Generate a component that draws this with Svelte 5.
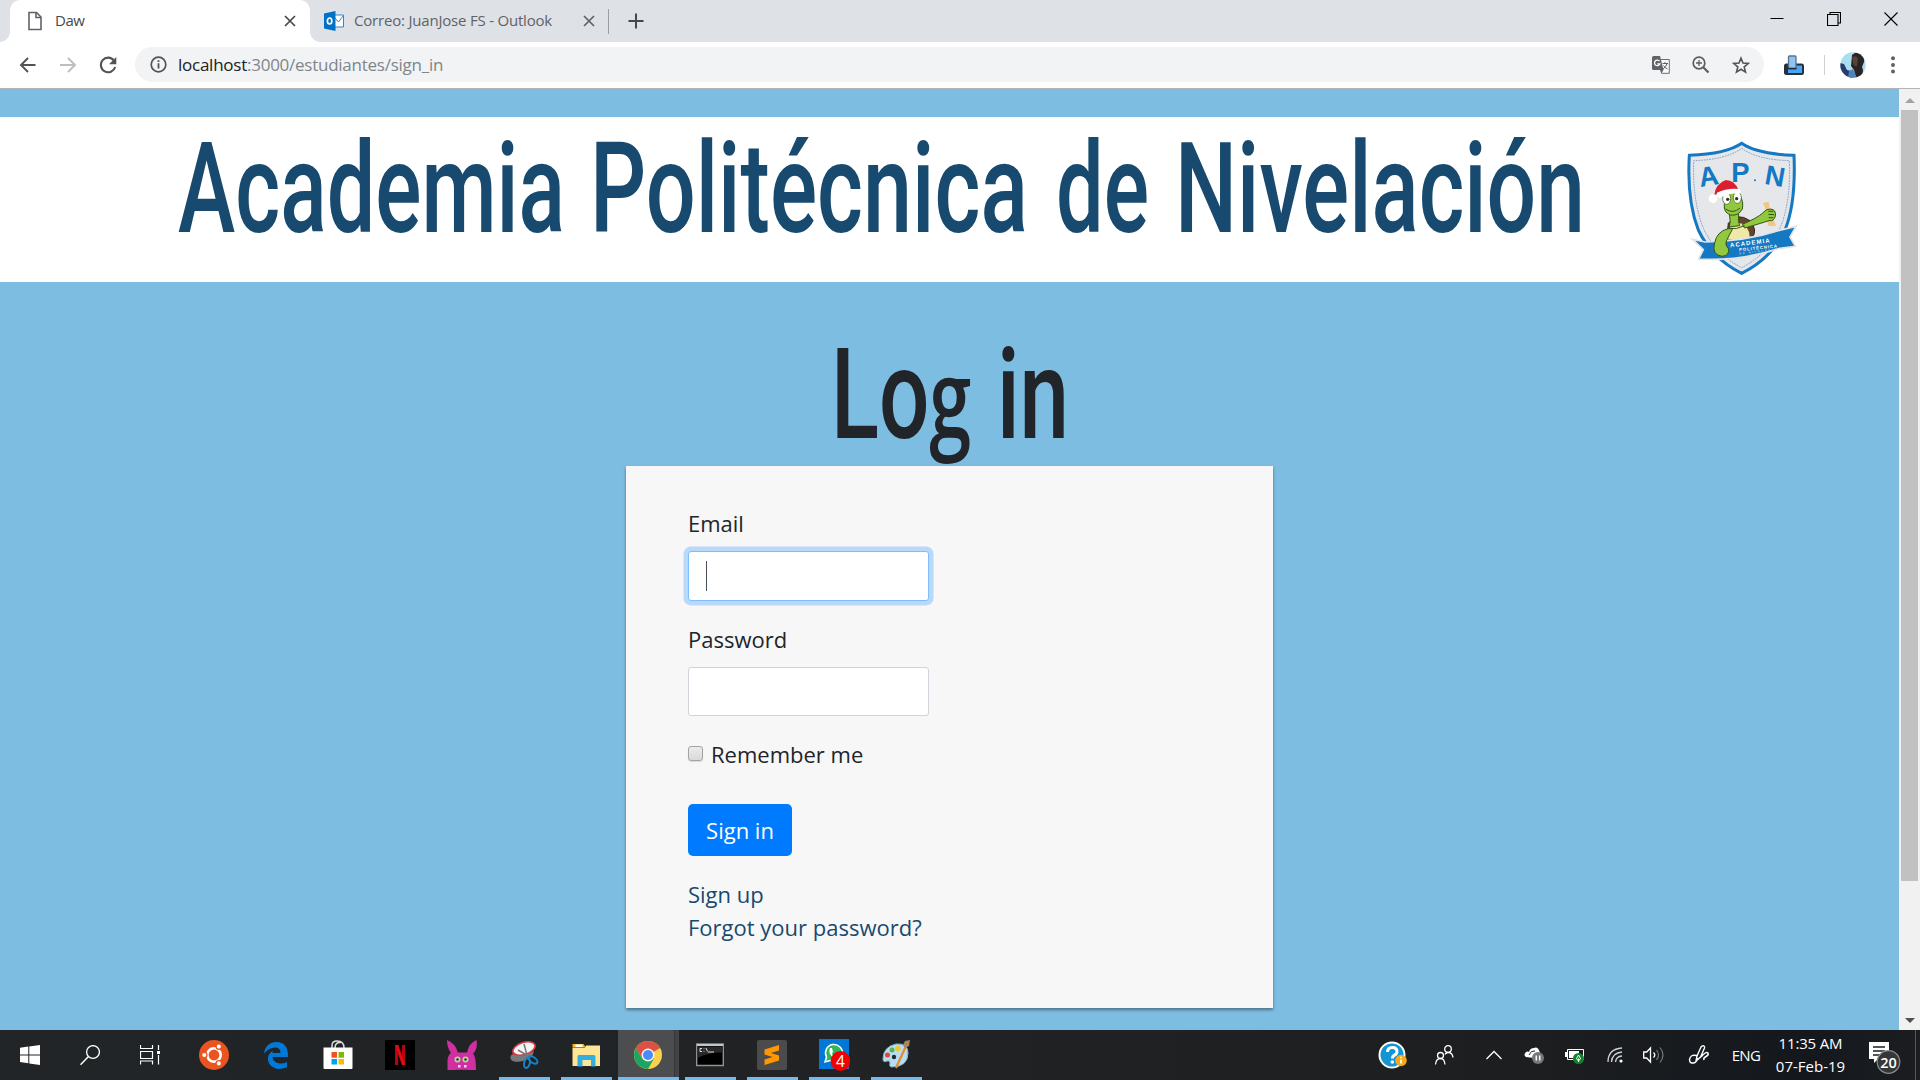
<script>
  let email = $state('');
  let password = $state('');
  let remember = $state(false);

  // Words of the banner heading: start x and drawn width
  const bannerWords = [
    { text: 'Academia', x: 18, width: 387 },
    { text: 'Politécnica', x: 430, width: 438 },
    { text: 'de', x: 896, width: 93 },
    { text: 'Nivelación', x: 1015, width: 410 }
  ];
</script>

<div class="screen">
  <div class="tabs">
    <div class="tab active">
      <svg class="doc" width="14" height="20" viewBox="0 0 14 20"><path d="M1 1.500h7.500l4.500 4.500v12.500H1zM8 1.500v5h5" fill="none" stroke="#5f6368" stroke-width="1.600" /></svg>
      <span class="daw">Daw</span>
      <svg class="x" width="12" height="12" viewBox="0 0 12 12"><path d="M1 1l10 10M11 1L1 11" stroke="#45494d" stroke-width="1.700" /></svg>
    </div>
    <div class="tab second">
      <svg width="20" height="20" viewBox="0 0 20 20">
        <path d="M9 4h10.500v12H9z" fill="#fff" stroke="#2b88d8" /><path d="M10 6l4.500 5L19 5" fill="none" stroke="#2b88d8" />
        <path d="M0 2.500L11.500 0v20L0 17.500z" fill="#0072c6" /><ellipse cx="5.600" cy="10" rx="2.200" ry="3" fill="none" stroke="#fff" stroke-width="1.700" />
      </svg>
      <span class="correo">Correo: JuanJose FS - Outlook</span>
      <svg class="x" width="12" height="12" viewBox="0 0 12 12"><path d="M1 1l10 10M11 1L1 11" stroke="#5f6368" stroke-width="1.700" /></svg>
    </div>
    <i class="tabsep"></i>
    <svg class="plus" width="16" height="16" viewBox="0 0 16 16"><path d="M8 .5v15M.5 8h15" stroke="#45494d" stroke-width="2" /></svg>
    <div class="winctl">
      <svg width="14" height="14" viewBox="0 0 14 14"><path d="M.5 6.500h13" stroke="#000" /></svg>
      <svg width="14" height="14" viewBox="0 0 14 14"><path d="M.5 2.500h10.500v11H.5zM3 2.500V.5h10.500v10.500H11" fill="none" stroke="#000" stroke-width="1.100" /></svg>
      <svg width="14" height="14" viewBox="0 0 14 14"><path d="M.5.5l13 13M13.500.5l-13 13" stroke="#000" stroke-width="1.100" /></svg>
    </div>
  </div>

  <div class="toolbar">
    <svg class="nav" width="18" height="18" viewBox="0 0 18 18"><path d="M16.500 9H2M9 2L2 9l7 7" fill="none" stroke="#505357" stroke-width="1.900" /></svg>
    <svg class="nav" width="18" height="18" viewBox="0 0 18 18"><path d="M1 9h14.500M9 2l7 7-7 7" fill="none" stroke="#bcbec1" stroke-width="1.900" /></svg>
    <svg class="nav" width="18" height="18" viewBox="0 0 18 18"><path d="M15 4.500A7.300 7.300 0 1 0 16.200 11" fill="none" stroke="#505357" stroke-width="2.100" /><path d="M17.300 1v7.300H10z" fill="#505357" /></svg>
    <div class="omnibox">
      <svg width="17" height="17" viewBox="0 0 17 17"><circle cx="8.500" cy="8.500" r="7.300" fill="none" stroke="#505357" stroke-width="1.700" /><path d="M8.500 7.300v5.200M8.500 4.200v1.900" stroke="#505357" stroke-width="1.800" /></svg>
      <span class="url"><b>localhost</b>:3000/estudiantes/sign_in</span>
      <div class="actions">
        <svg width="18" height="18" viewBox="0 0 18 18">
          <path d="M8 3.500h9.300v13.800H9.500z" fill="#f8f9fa" stroke="#6b6f74" /><path d="M0 1.500Q0 0 1.500 0H8l3.500 14H1.500Q0 14 0 12.500z" fill="#606469" />
          <path d="M7.600 5.200A2.800 2.800 0 1 0 8 7.800H5.300" fill="none" stroke="#fff" stroke-width="1.300" /><path d="M10.500 7.500h5.500M13 6v1.500M15 7.500q-.7 3.500-4 5.500M11.500 9.500q1.500 2.500 4 3.500" fill="none" stroke="#606469" /><path d="M8 14h3.500l-2 3z" fill="#606469" />
        </svg>
        <svg width="18" height="18" viewBox="0 0 18 18"><circle cx="7" cy="7" r="5.800" fill="none" stroke="#5a5e63" stroke-width="1.700" /><path d="M7 4v6M4 7h6" stroke="#5a5e63" stroke-width="1.300" /><path d="M11.200 11.200l5.300 5.300" stroke="#5a5e63" stroke-width="2.200" /></svg>
        <svg width="18" height="18" viewBox="0 0 18 18"><path d="M9 2.200l2 4.900 5.200.4-4 3.400 1.300 5.200L9 13.300l-4.500 2.800 1.300-5.200-4-3.400 5.200-.4z" fill="none" stroke="#505357" stroke-width="1.600" /></svg>
      </div>
    </div>
    <svg class="ext" width="20" height="20" viewBox="0 0 20 20"><rect x="1" y="9.500" width="18" height="9.500" rx="1.500" fill="#4aa3f5" stroke="#25303d" stroke-width="2" /><path d="M1 9.500h3v9.500H1z" fill="#25303d" /><rect x="4.500" y="1" width="7.500" height="13" rx="1" fill="#8fc4f5" stroke="#58718c" stroke-width="1.300" /><path d="M4 13.500h8.500" stroke="#25303d" stroke-width="1.600" /></svg>
    <i class="toolsep"></i>
    <svg class="avatar" width="26" height="26" viewBox="0 0 26 26">
      <defs><clipPath id="face"><circle cx="13" cy="13" r="12.700" /></clipPath></defs>
      <g clip-path="url(#face)"><path fill="#a9deef" d="M0 0h26v26H0z" /><path d="M0 11l4 1 3 6 4 1 2 8H0z" fill="#263c6d" /><path d="M12 3q4-4 9-2 4 4 3 9l-2 5 1 3-1 8h-6l-2-8-3-4z" fill="#2b2424" /><path d="M12 5q4-2 6 1l-1 8q-3 1-4-3z" fill="#5a4035" /><path d="M9 19l4-2 4 9H8z" fill="#4f83bd" /></g>
    </svg>
    <svg class="kebab" width="4" height="18" viewBox="0 0 4 18"><circle cx="2" cy="2.200" r="2" fill="#5f6368" /><circle cx="2" cy="9" r="2" fill="#5f6368" /><circle cx="2" cy="15.500" r="2" fill="#5f6368" /></svg>
  </div>

  <div class="viewport">
    <div class="page">
      <header>
        <svg class="title" width="1460" height="165" viewBox="0 0 1460 165">
          {#each bannerWords as word}
            <text x={word.x} y="115" textLength={word.width} lengthAdjust="spacingAndGlyphs">{word.text}</text>
          {/each}
        </svg>
        <svg class="logo" width="115" height="137" viewBox="75 60 345 411">
          <path d="M245 70Q290 102 402 106Q408 250 375 330Q335 415 245 460Q155 415 115 330Q80 240 88 106Q200 102 245 70z" fill="#e5e7ea" stroke="#1478c2" stroke-width="9" />
          <path d="M245 85Q292 119 388 122Q393 245 361 322Q325 402 245 443Q165 402 129 322Q97 240 101 122Q198 119 245 85z" fill="none" stroke="#6d8fb8" stroke-width="2.500" stroke-dasharray="5 3" />
          <text class="apn" x="121 214 311" y="201 185 191" rotate="-9 0 10">APN</text>
          <circle cx="285" cy="181" r="3" fill="#1478c2" />
          <path d="M205 310q25-35 65-8q25 30 5 52h-75z" fill="#65432f" stroke="#2e271b" stroke-width="3" />
          <path d="M214 314q18-12 42 0q16 20 15 45h-67q-5-25 10-45z" fill="#f1e8a7" stroke="#47531e" stroke-width="2" />
          <path d="M98 358L135 366Q260 363 355 332L408 319L390 351L406 379L360 385Q235 425 116 417L130 389z" fill="#1478c2" stroke="#e1e4e8" stroke-width="5" />
          <path d="M309 249l17-4 4 25 18 48-25-1 1-32z" fill="#efc784" />
          <path d="M247 313Q292 294 308 279Q318 266 332 267Q349 269 346 288Q343 304 327 302Q302 310 254 324zM204 326Q170 335 164 369Q154 404 186 409Q210 407 205 385Q191 374 204 353L218 326zM208 281h28q-3 24 3 36l-31 4q5-18 0-40z" fill="#91c83d" stroke="#35541d" stroke-width="3" />
          <path d="M193 226q22-16 45-2q14 19 9 43q-12 22-36 18q-21-8-18-32z" fill="#91c83d" stroke="#35541d" stroke-width="3" />
          <ellipse cx="200" cy="236" rx="12" ry="17" fill="#fff" stroke="#35541d" stroke-width="2" /><ellipse cx="232" cy="233" rx="12" ry="17" fill="#fff" stroke="#35541d" stroke-width="2" /><circle cx="203" cy="238" r="5" fill="#263c19" /><circle cx="230" cy="236" r="5" fill="#263c19" />
          <path d="M197 267q22 16 43-3M204 325q25 5 50-8M325 274l15 0M325 283l17 1M326 293l14 0" fill="none" stroke="#35541d" stroke-width="3" />
          <path d="M163 225Q166 192 197 180Q224 181 235 209L171 222z" fill="#da202e" />
          <path d="M171 218Q202 203 239 207q8 8-1 14Q207 218 181 233q-14-1-10-15z" fill="#fff" /><circle cx="159" cy="236" r="13" fill="#fff" />
          <g class="ribbon"><text x="211" y="382" textLength="119" transform="rotate(-7 211 382)" font-size="18">ACADEMIA</text><text x="238" y="394" textLength="114" transform="rotate(-6 238 394)" font-size="13">POLITÉCNICA</text><text x="238" y="404" textLength="123" transform="rotate(-7 238 404)" font-size="9" opacity=".55">DE NIVELACIÓN</text></g>
        </svg>
      </header>

      <svg class="heading" width="240" height="135" viewBox="0 0 240 135">
        <text x="2" y="107" textLength="238" lengthAdjust="spacingAndGlyphs">Lo<tspan class="g">g</tspan> in</text>
      </svg>

      <form class="card" onsubmit={(e) => e.preventDefault()}>
        <label for="email">Email</label>
        <div class="field focus"><i class="caret"></i><input id="email" type="email" bind:value={email} /></div>
        <label for="password" class="pw">Password</label>
        <div class="field plain"><input id="password" type="password" bind:value={password} /></div>
        <label class="remember"><input type="checkbox" bind:checked={remember} /><span>Remember me</span></label>
        <button type="submit">Sign in</button>
        <a href="#signup">Sign up</a>
        <a href="#forgot">Forgot your password?</a>
      </form>
    </div>
    <div class="scrollbar"><i class="up"></i><div class="thumb"></div><i class="down"></i></div>
  </div>

  <div class="taskbar">
    <div class="sys">
      <svg width="20" height="20" viewBox="0 0 20 20"><path d="M0 2.800l8.300-1.200v7.800H0zM9.300 1.400L20 0v9.400H9.300zM0 10.400h8.300v7.900L0 17.100zM9.300 10.400H20V20L9.300 18.500z" fill="#fff" /></svg>
    </div>
    <div class="sys"><svg width="20" height="20" viewBox="0 0 20 20"><circle cx="13" cy="7" r="6.400" fill="none" stroke="#fff" stroke-width="1.300" /><path d="M8.500 11.500L.5 19.700" stroke="#fff" stroke-width="1.500" /></svg></div>
    <div class="sys"><svg width="20" height="20" viewBox="0 0 20 20"><path d="M.5 0v3.500h12V0M.5 19.500V16h12v3.500M.5 6.500h12v7H.5zM18.500 0v5M18.500 10v9.500" fill="none" stroke="#fff" stroke-width="1.200" /><path d="M17 6h3v3h-3z" fill="#fff" /></svg></div>
    <div class="apps">
      <div class="app"><svg width="30" height="30" viewBox="0 0 30 30"><circle cx="15" cy="15" r="15" fill="#e95420" /><circle cx="15" cy="15" r="6.700" fill="none" stroke="#fff" stroke-width="2.600" /><g fill="#fff" stroke="#e95420" stroke-width="1.300"><circle cx="5.300" cy="15" r="2.700" /><circle cx="19.800" cy="6.600" r="2.700" /><circle cx="19.800" cy="23.400" r="2.700" /></g></svg></div>
      <div class="app"><svg width="26" height="28" viewBox="0 0 26 28"><path d="M1 12.500C2 5 7 1 13.500 1C21 1 25.500 6 25 16H9.500C10 20.500 14 22.500 18 22.500Q21.500 22.500 24 21v5.300Q20 28 15.500 28C8 27 4.500 22 5 17Q5.500 12 10 9.500Q9.500 10.500 9.300 12h8.200Q17.500 6.500 12 6.500Q6 6.500 1 12.500z" fill="#0078d7" /></svg></div>
      <div class="app"><svg width="30" height="30" viewBox="0 0 30 30"><path d="M9 8V5.500q0-4.500 5-4.500 7 0 7 7M12 8q0-6 6-5.500" fill="none" stroke="#ddd" stroke-width="1.500" /><path d="M.5 7.500h29v20.500q0 1-1 1h-27q-1 0-1-1z" fill="#fff" /><path d="M8.500 12H14v5.700H8.500z" fill="#f25022" /><path d="M15.500 12H21v5.700h-5.500z" fill="#7fba00" /><path d="M8.500 19H14v5.500H8.500z" fill="#00a4ef" /><path d="M15.500 19H21v5.500h-5.500z" fill="#ffb900" /></svg></div>
      <div class="app"><svg width="30" height="30" viewBox="0 0 30 30"><path d="M0 0h30v30H0z" fill="#000" /><path d="M10 5h3.200v20H10zM17 5h3.200v20H17z" fill="#b20710" /><path d="M10 5h3.300l7 20H17z" fill="#e50914" /></svg></div>
      <div class="app"><svg width="30" height="30" viewBox="0 0 30 30"><path d="M.5 30V20Q1 15 4 13Q0 8 0 0Q8 3 11 12.500h9Q22 3 29.500 0Q31 9 26 13.500Q29 16 29 30z" fill="#cf2fa1" /><circle cx="10.500" cy="19.500" r="3" fill="#b7d59a" /><circle cx="18.500" cy="19.500" r="3" fill="#b7d59a" /><circle cx="10.500" cy="19.500" r="1.200" fill="#29361f" /><circle cx="18.500" cy="19.500" r="1.200" fill="#29361f" /><path d="M11 25h2.500v2.500H11zM17 25h2.500v2.500H17z" fill="#ffd8f4" /><path d="M8 29h13v1H8z" fill="#e4212c" /></svg></div>
      <div class="app open"><svg width="30" height="30" viewBox="0 0 30 30"><ellipse cx="13" cy="15" rx="12" ry="6" fill="#777a7d" transform="rotate(-18 13 15)" /><path d="M3 15l1-4 23-5-3 6z" fill="#b52b35" /><ellipse cx="15" cy="8.500" rx="11.500" ry="6" fill="#f4f4f4" stroke="#d63b45" stroke-width="1.500" transform="rotate(-18 15 8.500)" /><path d="M15 4l4 15M9 10l12 7" stroke="#777" stroke-width="1.500" /><ellipse cx="18" cy="23" rx="2.800" ry="5" fill="none" stroke="#1683c6" stroke-width="2" transform="rotate(15 18 23)" /><ellipse cx="24" cy="20" rx="2.800" ry="5" fill="none" stroke="#1683c6" stroke-width="2" transform="rotate(-55 24 20)" /></svg></div>
      <div class="app open"><svg width="30" height="30" viewBox="0 0 30 30"><path d="M1.500 4h11l2 3H1.500z" fill="#f1b71c" /><path d="M4.500 4.500h7v2.500h-7z" fill="#fff" /><path d="M1.500 7.500H14l1-2h14v20.500H1.500z" fill="#ffe596" /><path d="M6.500 26.500V16.500q0-1.500 1.500-1.500h15q1.500 0 1.500 1.500v10H20V20h-8.500v6.500z" fill="#34ade1" /></svg></div>
      <div class="app open current"><svg width="28" height="28" viewBox="0 0 28 28"><circle cx="14" cy="14" r="14" fill="#fbd04b" /><path d="M14 14L1.900 7A14 14 0 0 1 26.100 7z" fill="#dd5144" /><path d="M14 7h12.100A14 14 0 0 0 1.900 7L8 17.500z" fill="#dd5144" /><path d="M1.900 7A14 14 0 0 0 14 28l6-10.500L8 17.500z" fill="#1da462" /><circle cx="14" cy="14" r="6.500" fill="#f4f5f5" /><circle cx="14" cy="14" r="5" fill="#4c8bf5" /></svg></div>
      <div class="app open"><svg width="28" height="24" viewBox="0 0 28 24"><path d="M.7 1h26.600v21.500H.7z" fill="#000" stroke="#8f9395" stroke-width="1.400" /><path d="M1 1h26v2H1z" fill="#c3c6c8" /><path d="M1.500 3.500h25v6Q13 9 1.500 15z" fill="#292929" /><path d="M6 5.500H4v3h2M8 5.500v.7M8 8v.7M10 5l1.500 3.500M12 9h6" fill="none" stroke="#ddd" /></svg></div>
      <div class="app open"><svg width="30" height="30" viewBox="0 0 30 30"><rect width="30" height="30" rx="2" fill="#4b4b4c" /><path d="M7.500 9.500L22 5v5.500l-8 2.500 8 2.500v5L7.500 25v-5.500l8-2.500-8-2.500z" fill="#ff9800" /></svg></div>
      <div class="app open"><svg width="32" height="32" viewBox="0 0 32 32"><path d="M1 0h30v30H1z" fill="#0078d7" /><path d="M7 23l1.500-5A8.500 8.500 0 1 1 12 21.500z" fill="#32b65b" stroke="#fff" stroke-width="1.500" /><path d="M12 9q-3 7 6 11l3-2-3-2-2 1q-2-1-2-3l1-1-1-4z" fill="#fff" /><circle cx="22.500" cy="22" r="10" fill="#f00000" /><text x="22.500" y="27.500" text-anchor="middle" fill="#fff" font-size="15.500">4</text></svg></div>
      <div class="app open"><svg width="30" height="30" viewBox="0 0 30 30"><path d="M2 19Q2 7 15 4q12-1 12 9 0 14-17 14-2-1-1-4 0-3-3-2-4 2-4-2z" fill="#b9dcef" stroke="#84b4d2" /><circle cx="13" cy="17" r="2.200" fill="#222b34" /><circle cx="6.500" cy="15" r="2.500" fill="#de493b" /><circle cx="11" cy="10" r="2.500" fill="#56b749" /><circle cx="17" cy="8.500" r="2.700" fill="#f2c430" /><path d="M25 6L15 28" stroke="#e28b31" stroke-width="2.200" /><path d="M22 5l2-4 5-1-1 6-4 2z" fill="#aa845c" /></svg></div>
    </div>
    <div class="tray">
      <svg width="30" height="30" viewBox="0 0 30 30"><circle cx="15" cy="15" r="12.500" fill="#1594d4" stroke="#fff" stroke-width="2" /><path d="M10.500 12q0-4.500 4.800-4.500 4.700 0 4.700 4 0 2.500-2.500 3.700-2 1-2 3.300" fill="none" stroke="#fff" stroke-width="3" /><circle cx="15.300" cy="22" r="1.800" fill="#fff" /><circle cx="24" cy="20.500" r="5.800" fill="#f5a81c" /><path d="M24 19.500v4M24 16.800v1.500" stroke="#fff" stroke-width="1.700" /></svg>
      <svg width="20" height="20" viewBox="0 0 20 20" fill="none" stroke="#fff" stroke-width="1.300"><circle cx="6.500" cy="10.500" r="3" /><path d="M1.500 19.500q.5-6 5-6 4 0 4.500 6" /><circle cx="14" cy="4" r="3.300" /><path d="M11 9.500q1-2 3-2 4.500 0 5 5" /></svg>
      <svg width="16" height="10" viewBox="0 0 16 10"><path d="M.5 9L8 1.500 15.500 9" fill="none" stroke="#fff" stroke-width="1.300" /></svg>
      <svg width="20" height="18" viewBox="0 0 20 18"><path d="M2 11Q-1 9 2 6q2-1 3 0 1-4 5-4 4-2 6 5l-6 5z" fill="#fff" /><path d="M5 9q2-5 6-4" fill="none" stroke="#222" /><circle cx="14" cy="12" r="6" fill="#777" /><path d="M12.300 9.500v5M15.700 9.500v5" stroke="#fff" stroke-width="1.500" /></svg>
      <svg width="20" height="18" viewBox="0 0 20 18"><path d="M2.500 3.500h16v10h-16z" fill="none" stroke="#fff" /><path d="M4 5h10v7H4z" fill="#fff" /><path d="M0 6h2v5H0z" fill="#fff" /><circle cx="13.500" cy="12.500" r="5.500" fill="#10842c" /><path d="M13.500 12.500V16M11.500 12.500l2-3.500 2 3.500-2 2.500z" fill="none" stroke="#fff" /></svg>
      <svg width="16" height="16" viewBox="0 0 16 16" fill="none"><path d="M1 15Q1 2 15 1M4.500 15Q5 6 15 5M8.500 15Q9 9.500 15 9" stroke="#d0d0d0" stroke-width="1.300" /><circle cx="14" cy="14" r="1.600" fill="#fff" /></svg>
      <svg width="22" height="18" viewBox="0 0 22 18" fill="none"><path d="M.7 6h3L7.500 2v14L3.700 12h-3z" stroke="#fff" stroke-width="1.300" /><path d="M10.500 6.500q2.500 2.500 0 5" stroke="#fff" stroke-width="1.300" /><path d="M13.500 4q4 5 0 10M17 1.500q6 7.500 0 15" stroke="#777" stroke-width="1.200" /></svg>
      <svg width="22" height="22" viewBox="0 0 22 22" fill="none" stroke="#fff" stroke-width="1.400"><path d="M8 17l1-5 4-9q1.500-2 3-1 1 .7.500 2l-4 9zM8.500 11.500q-6-1.500-7 4 0 4 4 3.500 3-.5 4.500-5M13 13q5-6 7-4 1 2-2 3.500-3 1.500-2 3.500" /></svg>
      <span class="lang">ENG</span>
      <div class="clock"><span class="time">11:35 AM</span><span class="date">07-Feb-19</span></div>
      <svg class="note" width="34" height="34" viewBox="0 0 34 34"><path d="M0 2h20v17H9l-4 4v-4H0z" fill="#fff" /><path d="M4 7h12M4 11h12M4 15h8" stroke="#1c1e20" stroke-width="1.300" /><circle cx="19.500" cy="22" r="11.300" fill="#343638" stroke="#8a8c8e" stroke-width="1.200" /><text x="19.500" y="27.500" text-anchor="middle" fill="#fff" font-weight="600" font-size="14.500">20</text></svg>
      <i class="peek"></i>
    </div>
  </div>
</div>

<style>
  :global(body) { margin: 0; overflow: hidden; }
  .screen { width: 1920px; height: 1080px; display: flex; flex-direction: column; overflow: hidden; font-family: 'Open Sans', 'Noto Sans', sans-serif; background: #fff; }
  .screen * { box-sizing: border-box; }
  svg { display: block; flex: none; }

  .tabs { height: 42px; flex: none; background: #dee1e6; display: flex; align-items: center; padding-left: 10px; }
  .tab { height: 42px; display: flex; align-items: center; white-space: nowrap; font-size: 15px; }
  .tab span { margin-top: -2px; }
  .active { width: 300px; background: #fff; border-radius: 10px 10px 0 0; padding: 0 14px 0 18px; position: relative; color: #45494d; }
  .active::before, .active::after { content: ''; position: absolute; bottom: 0; width: 10px; height: 10px; }
  .active::before { left: -10px; background: radial-gradient(circle at 0 0, #dee1e6 9.500px, #fff 10px); }
  .active::after { right: -10px; background: radial-gradient(circle at 100% 0, #dee1e6 9.500px, #fff 10px); }
  .daw { margin-left: 13px; letter-spacing: -.5px; }
  .x { margin-left: auto; }
  .second { width: 298px; padding: 0 13px 0 14px; color: #5f6368; }
  .tab .correo { margin-left: 10px; letter-spacing: -.2px; }
  .tabsep { width: 1px; height: 25px; background: #9b9ea3; }
  .plus { margin-left: 19px; }
  .winctl { margin-left: auto; display: flex; gap: 43px; padding: 0 22px 5px 0; }

  .toolbar { height: 47px; flex: none; display: flex; align-items: center; padding: 0 20px 1px 19px; border-bottom: 1px solid #b2b4b7; }
  .nav { margin-right: 22px; }
  .nav:nth-child(3) { margin-right: 18px; }
  .omnibox { width: 1629px; height: 35px; border-radius: 18px; background: #f1f3f4; display: flex; align-items: center; padding: 0 14px 0 15px; }
  .url { margin-left: 11px; font-size: 17px; color: #80868b; letter-spacing: -.25px; white-space: nowrap; }
  .url b { font-weight: 400; color: #202124; }
  .actions { margin-left: auto; display: flex; gap: 22px; }
  .ext { margin-left: 20px; }
  .toolsep { width: 1px; height: 20px; background: #cfd1d4; margin-left: 20px; }
  .avatar { margin-left: 15px; }
  .kebab { margin-left: 25px; }

  .viewport { height: 941px; flex: none; display: flex; }
  .page { width: 1899px; background: #7ebde2; padding-top: 28px; display: flex; flex-direction: column; }
  header { height: 165px; flex: none; background: #fff; display: flex; padding-left: 160px; }
  .title { overflow: visible; }
  .title text { font: 500 126.500px Roboto, sans-serif; fill: #174a6e; }
  .logo { margin: 23px 0 0 65px; }
  .apn { font: 700 82px 'Liberation Sans', sans-serif; fill: #1478c2; }
  .ribbon text { font-family: 'Liberation Sans', sans-serif; font-weight: 700; fill: #fff; }
  .heading { margin: 49px 0 0 829px; overflow: visible; }
  .heading text { font: 500 126.500px Roboto, sans-serif; fill: #212529; word-spacing: 5px; }
  .heading .g { font-family: 'Open Sans', sans-serif; font-weight: 600; font-size: 108px; }
  .card { margin: 0 0 0 626px; width: 647px; height: 542px; background: #f7f7f7; box-shadow: 0 2px 3px rgba(0, 0, 0, .4); padding: 41px 62px 0; display: flex; flex-direction: column; align-items: flex-start; font-size: 22px; line-height: 33px; color: #212529; }
  label { height: 33px; }
  .field { width: 241px; background: #fff; border: 1px solid #ced4da; border-radius: 3px; display: flex; align-items: center; }
  .field input { width: 180px; border: 0; outline: 0; background: transparent; font: inherit; }
  .focus { height: 50px; margin-top: 11px; padding-left: 17px; border-color: #80bdff; box-shadow: 0 0 0 4.500px #b9d9fb; }
  .plain { height: 49px; margin-top: 11px; padding-left: 17px; }
  .caret { width: 1px; height: 30px; background: #495057; }
  .pw { margin-top: 22px; }
  .remember { display: flex; align-items: center; margin-top: 22px; }
  .remember input { appearance: none; width: 15px; height: 15px; margin: 0 8px 2px 0; border: 1px solid #a4a4a4; border-radius: 3px; background: linear-gradient(#ececec, #d9d9d9); box-shadow: 0 1px 1px rgba(0, 0, 0, .12); }
  button { width: 104px; height: 52px; margin: 33px 0 22px; padding: 0; border: 0; border-radius: 5px; background: #007bff; color: #fff; font: inherit; }
  a { color: #174a6e; text-decoration: none; }

  .scrollbar { width: 21px; background: #f1f1f1; display: flex; flex-direction: column; align-items: center; }
  .up { margin-top: 9px; border: 5px solid transparent; border-top: 0; border-bottom: 5px solid #a3a3a3; }
  .thumb { margin-top: 7px; width: 17px; height: 771px; background: #c1c1c1; }
  .down { margin: auto 0 7px; border: 5px solid transparent; border-bottom: 0; border-top: 5px solid #505050; }

  .taskbar { height: 50px; flex: none; display: flex; background: linear-gradient(90deg, #222527, #202224 50%, #1c1e20 80%, #14181d 94%, #1b1d20); color: #fff; }
  .sys { width: 60px; display: grid; place-items: center; }
  .apps { display: flex; margin-left: 3px; }
  .app { width: 62px; display: grid; place-items: center; position: relative; }
  .open::after { content: ''; position: absolute; left: 6px; bottom: 0; width: 51px; height: 3px; background: #76b9ed; }
  .current { background: linear-gradient(90deg, transparent 1px, #4b4d4f 1px 57px, #343638 57px 58px, #414345 58px); }
  .current::after { left: 1px; width: 61px; }
  .tray { margin-left: auto; width: 554px; display: grid; grid-template-columns: 52px 52px 48px 32px 50px 30px 48px 42px 54px 74px 62px 10px; align-items: center; justify-items: center; font-size: 15px; }
  .lang { letter-spacing: -.6px; margin-right: 2px; }
  .clock { display: flex; flex-direction: column; align-items: center; line-height: 23px; white-space: nowrap; font-size: 15px; margin-right: 1px; }
  .time { letter-spacing: -.15px; }
  .date { letter-spacing: 0; }
  .note { margin: 4px 0 0 14px; }
  .peek { width: 1px; height: 50px; background: #54575a; }
</style>
